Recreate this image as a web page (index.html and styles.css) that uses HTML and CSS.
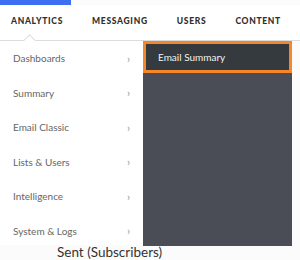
FILE: index.html
```html
<!DOCTYPE html>
<html lang="en">
<head>
  <meta charset="UTF-8" />
  <title>Analytics menu</title>
  <link rel="stylesheet" href="styles.css">
</head>
<body>
  <div class="accent"></div>
  <nav class="nav">
    <a class="nav-item">Analytics</a>
    <a class="nav-item">Messaging</a>
    <a class="nav-item">Users</a>
    <a class="nav-item">Content</a>
    <span class="caret"></span>
  </nav>

  <div class="dropdown">
    <ul class="menu">
      <li>Dashboards <span class="chev">&rsaquo;</span></li>
      <li>Summary <span class="chev">&rsaquo;</span></li>
      <li>Email Classic <span class="chev">&rsaquo;</span></li>
      <li>Lists &amp; Users <span class="chev">&rsaquo;</span></li>
      <li>Intelligence <span class="chev">&rsaquo;</span></li>
      <li>System &amp; Logs <span class="chev">&rsaquo;</span></li>
    </ul>
    <div class="submenu">
      <div class="sub-item active">Email Summary</div>
    </div>
  </div>

  <div class="page-title">Sent (Subscribers)</div>
</body>
</html>
```

FILE: styles.css
```css
body {
  margin: 0;
  font-family: Lato, "Open Sans", sans-serif;
  background: #fbfbfb;
  color: #333;
  width: 300px;
  height: 260px;
  overflow: hidden;
}

.accent {
  width: 71px;
  height: 5px;
  background: #3d6ff0;
}

.nav {
  position: relative;
  display: flex;
  height: 35px;
  padding-left: 11px;
  align-items: center;
  border-bottom: 1px solid #dcdcdc;
  background: #fff;
}

.nav-item {
  font-size: 8.5px;
  font-weight: 900;
  letter-spacing: 0.7px;
  text-transform: uppercase;
  color: #2e2e2e;
  margin-right: 29px;
  margin-top: -3px;
}

.caret {
  position: absolute;
  left: 25px;
  bottom: -5px;
  width: 8px;
  height: 8px;
  background: #fff;
  border-left: 1px solid #dcdcdc;
  border-top: 1px solid #dcdcdc;
  transform: rotate(45deg);
}

.dropdown {
  display: flex;
  width: 292px;
  height: 204px;
}

.menu {
  list-style: none;
  margin: 0;
  padding: 0;
  width: 143px;
  height: 204px;
  background: #fff;
}

.menu li {
  display: flex;
  justify-content: space-between;
  align-items: center;
  height: 34.5px;
  padding: 0 13px 0 13px;
  font-size: 10px;
  color: #666;
}

.chev {
  font-size: 11px;
  color: #999;
}

.submenu {
  width: 149px;
  height: 205px;
  background: #4a4d56;
}

.sub-item {
  height: 26px;
  line-height: 26px;
  padding-left: 12px;
  font-size: 10px;
  color: #f2f2f2;
}

.active {
  background: #343a3e;
  border: 3px solid #f5872a;
}

.page-title {
  margin-top: -1px;
  padding-left: 57px;
  font-size: 13.5px;
  color: #333;
}
```
